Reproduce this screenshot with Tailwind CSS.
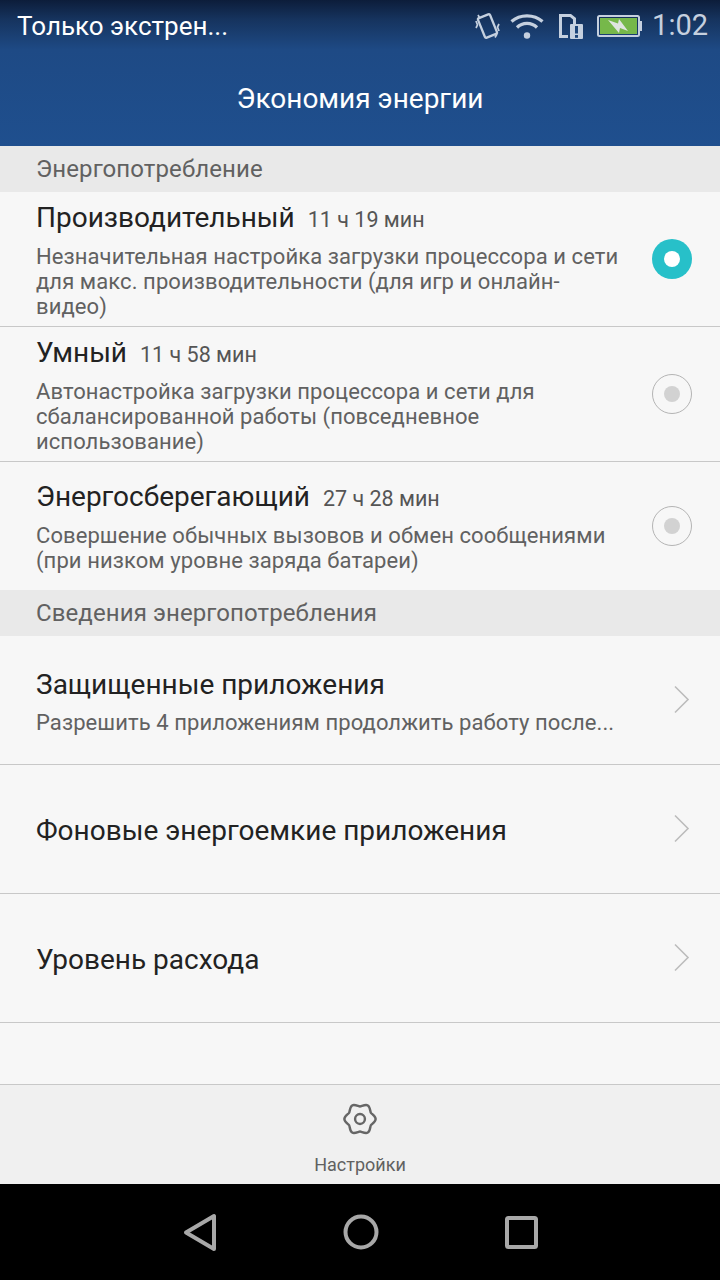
<!DOCTYPE html>
<html lang="ru">
<head>
  <meta charset="UTF-8">
  <title>Экономия энергии</title>
  <script src="https://cdn.jsdelivr.net/npm/@tailwindcss/browser@4"></script>
</head>
<body class="w-[720px] h-[1280px] overflow-hidden bg-[#f7f7f7] font-['Roboto',sans-serif] flex flex-col">
  <!-- Шапка -->
  <header class="h-[146px] shrink-0 bg-[linear-gradient(180deg,#0c1d3a_0px,#16345f_20px,#1e4a85_50px,#1f4f8e_146px)]">
    <div class="h-[52px] flex items-center pl-[17px] pr-[12px] text-[#c5d0df]">
      <span class="text-white flex-1 text-[26px]">Только экстрен...</span>
      <svg class="w-[25px] h-[28px] mr-[10px]" viewBox="0 0 25 28" fill="none" stroke="#c5d0df">
        <rect x="6" y="3.5" width="13" height="21" rx="1.5" stroke-width="2.3" transform="rotate(-22 12.5 14)"/>
        <path d="M1 9 L2.5 13 L1 16 M3 3 L5 6.5 M24 12 L22.5 15 L24 19 M22 22 L20 25.5" stroke-width="1.7"/>
      </svg>
      <svg class="w-[34px] h-[26px] mr-[15px]" viewBox="0 0 34 26" fill="none" stroke="#c5d0df" stroke-width="3.2">
        <path d="M1.5 8.5 C10 1 24 1 32.5 8.5"/>
        <path d="M7 14.5 C12.5 9 21.5 9 27 14.5"/>
        <circle cx="17" cy="22.5" r="3.2" fill="#c5d0df" stroke="none"/>
      </svg>
      <svg class="w-[24px] h-[25px] mr-[14px]" viewBox="0 0 24 25">
        <path d="M0 0 H12 L17 4 V10 H14 V5.5 L11 3 H3 V21 H9 V24 H0 Z" fill="#c5d0df"/>
        <rect x="11" y="10" width="13" height="15" rx="1" fill="#c5d0df"/>
        <rect x="16" y="12" width="3" height="7.5" fill="#1c4478"/>
        <rect x="16" y="21" width="3" height="2.8" fill="#1c4478"/>
      </svg>
      <svg class="w-[45px] h-[22px] mr-[10px]" viewBox="0 0 45 22">
        <rect x="1" y="1" width="41" height="20" rx="1.5" fill="none" stroke="#c5d0df" stroke-width="2"/>
        <rect x="3" y="3" width="37" height="16" fill="#76b84a"/>
        <rect x="43" y="6" width="2" height="10" fill="#c5d0df"/>
        <path d="M11 5 L21 8.5 L22 4 L31 16 L23 13 L22 18 Z" fill="#dfe5e0"/>
      </svg>
      <span class="text-[29px]">1:02</span>
    </div>
    <h1 class="h-[94px] flex items-center justify-center text-[28px] text-white">Экономия энергии</h1>
  </header>

  <main class="flex-1 flex flex-col">
    <div class="h-[46px] shrink-0 bg-[#e9e9e9] px-[36px] flex items-center text-[24px] tracking-[0.1px] text-[#616161]">Энергопотребление</div>

    <div class="h-[135px] shrink-0 border-b border-[#c8c8c8] pl-[36px] pr-[28px] flex items-center">
      <div class="flex-1">
        <div class="flex items-baseline leading-[36px]"><span class="text-[28px] text-[#222]">Производительный</span><span class="ml-[13px] text-[21.5px] text-[#555]">11 ч 19 мин</span></div>
        <p class="mt-[6px] text-[22px] tracking-[0.08px] leading-[25px] text-[#616161]">Незначительная настройка загрузки процессора и сети<br>для макс. производительности (для игр и онлайн-<br>видео)</p>
      </div>
      <div class="w-[40px] h-[40px] rounded-full bg-[#27c0c9] flex items-center justify-center"><div class="w-[16px] h-[16px] rounded-full bg-white"></div></div>
    </div>

    <div class="h-[135px] shrink-0 border-b border-[#c8c8c8] pl-[36px] pr-[28px] flex items-center">
      <div class="flex-1">
        <div class="flex items-baseline leading-[36px]"><span class="text-[28px] text-[#222]">Умный</span><span class="ml-[13px] text-[21.5px] text-[#555]">11 ч 58 мин</span></div>
        <p class="mt-[6px] text-[22px] tracking-[0.08px] leading-[25px] text-[#616161]">Автонастройка загрузки процессора и сети для<br>сбалансированной работы (повседневное<br>использование)</p>
      </div>
      <div class="w-[40px] h-[40px] rounded-full border border-[#b4b4b4] flex items-center justify-center"><div class="w-[16px] h-[16px] rounded-full bg-[#d2d2d2]"></div></div>
    </div>

    <div class="h-[128px] shrink-0 pl-[36px] pr-[28px] flex items-center">
      <div class="flex-1">
        <div class="flex items-baseline leading-[36px]"><span class="text-[28px] text-[#222]">Энергосберегающий</span><span class="ml-[13px] text-[21.5px] text-[#555]">27 ч 28 мин</span></div>
        <p class="mt-[6px] text-[22px] tracking-[0.08px] leading-[25px] text-[#616161]">Совершение обычных вызовов и обмен сообщениями<br>(при низком уровне заряда батареи)</p>
      </div>
      <div class="w-[40px] h-[40px] rounded-full border border-[#b4b4b4] flex items-center justify-center"><div class="w-[16px] h-[16px] rounded-full bg-[#d2d2d2]"></div></div>
    </div>

    <div class="h-[46px] shrink-0 bg-[#e9e9e9] px-[36px] flex items-center text-[24px] tracking-[0.1px] text-[#616161]">Сведения энергопотребления</div>

    <div class="h-[129px] shrink-0 border-b border-[#c8c8c8] pl-[36px] pr-[28px] flex items-center">
      <div class="flex-1 pt-[2px]">
        <div class="text-[28px] leading-[36px] text-[#222]">Защищенные приложения</div>
        <p class="mt-[7px] text-[22px] tracking-[0.08px] leading-[25px] text-[#616161]">Разрешить 4 приложениям продолжить работу после...</p>
      </div>
      <svg class="w-[20px] h-[30px]" viewBox="0 0 20 30" fill="none" stroke="#bcbcbc" stroke-width="1.6"><path d="M3 1.5 L16 14.5 L3 27.5"/></svg>
    </div>
    <div class="h-[129px] shrink-0 border-b border-[#c8c8c8] pl-[36px] pr-[28px] flex items-center">
      <div class="flex-1 pt-[3px] text-[28px] text-[#222]">Фоновые энергоемкие приложения</div>
      <svg class="w-[20px] h-[30px]" viewBox="0 0 20 30" fill="none" stroke="#bcbcbc" stroke-width="1.6"><path d="M3 1.5 L16 14.5 L3 27.5"/></svg>
    </div>
    <div class="h-[129px] shrink-0 border-b border-[#c8c8c8] pl-[36px] pr-[28px] flex items-center">
      <div class="flex-1 pt-[3px] text-[28px] text-[#222]">Уровень расхода</div>
      <svg class="w-[20px] h-[30px]" viewBox="0 0 20 30" fill="none" stroke="#bcbcbc" stroke-width="1.6"><path d="M3 1.5 L16 14.5 L3 27.5"/></svg>
    </div>
  </main>

  <footer class="h-[100px] shrink-0 bg-[#f0f0f0] border-t border-[#c8c8c8] flex flex-col items-center pt-[17px]">
    <svg class="w-[34px] h-[34px]" viewBox="-1 -1 38 38" fill="none" stroke="#666" stroke-width="2.7" stroke-linejoin="round">
      <path d="M35.5 18 C35.5 21.2 30.92 23.61 30.12 25 C29.32 26.39 29.52 31.56 26.75 33.16 C23.98 34.76 19.6 32 18 32 C16.4 32 12.02 34.76 9.25 33.16 C6.48 31.56 6.68 26.39 5.88 25 C5.08 23.61 0.5 21.2 0.5 18 C0.5 14.8 5.08 12.39 5.88 11 C6.68 9.61 6.48 4.44 9.25 2.84 C12.02 1.24 16.4 4 18 4 C19.6 4 23.98 1.24 26.75 2.84 C29.52 4.44 29.32 9.61 30.12 11 C30.92 12.39 35.5 14.8 35.5 18 Z"/>
      <circle cx="18" cy="18" r="5.5"/>
    </svg>
    <span class="mt-[18px] text-[18px] leading-[22px] text-[#616161]">Настройки</span>
  </footer>

  <nav class="h-[96px] shrink-0 bg-black flex items-center justify-center">
    <svg class="w-[34px] h-[39px]" viewBox="0 0 34 39" fill="none" stroke="#a8a8a8" stroke-width="4" stroke-linejoin="round"><path d="M31 3 V36 L3 19.5 Z"/></svg>
    <svg class="ml-[126px] w-[36px] h-[36px]" viewBox="0 0 36 36" fill="none" stroke="#a8a8a8" stroke-width="4"><circle cx="18" cy="18" r="15.5"/></svg>
    <svg class="ml-[126px] w-[33px] h-[33px]" viewBox="0 0 33 33" fill="none" stroke="#a8a8a8" stroke-width="4" stroke-linejoin="round"><rect x="2" y="2" width="29" height="29" rx="1.5"/></svg>
  </nav>
</body>
</html>
